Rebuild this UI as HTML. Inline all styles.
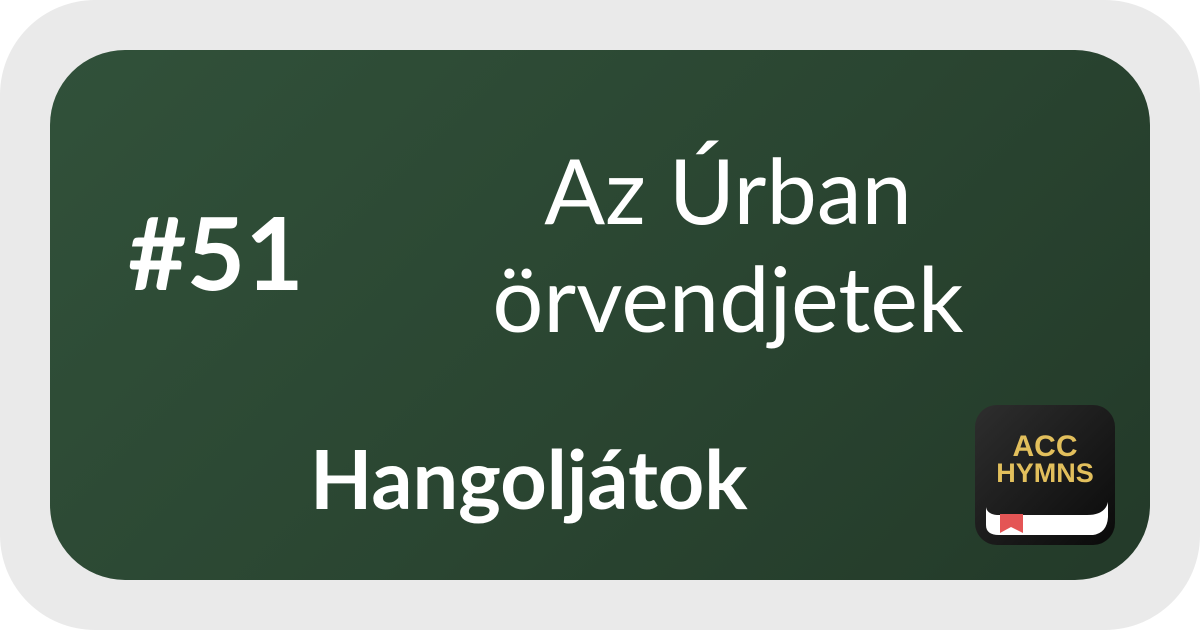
<!DOCTYPE html>
<html><head><style>
html,body{margin:0;padding:0;background:#fff;}
.outer{position:absolute;left:0;top:0;width:1200px;height:630px;background:#eaeaea;border-radius:95px;}
.card{position:absolute;left:50px;top:50px;width:1100px;height:530px;border-radius:75px;background:linear-gradient(135deg,#31513a 0%,#2a4531 55%,#233a29 100%);}
.t{position:absolute;color:#fff;font-family:"Lato","Liberation Sans",sans-serif;white-space:nowrap;}
</style></head><body>
<div class="outer"></div>
<div class="card"></div>
<div class="t" style="left:128px;top:196px;font-size:101px;font-weight:bold;line-height:110px;">#51</div>
<div class="t" style="left:428px;width:600px;top:136px;font-size:90px;line-height:108px;text-align:center;">Az Úrban<br>örvendjetek</div>
<div class="t" style="left:310px;top:437px;font-size:81px;font-weight:bold;line-height:84px;">Hangoljátok</div>
<svg style="position:absolute;left:975px;top:405px" width="140" height="140" viewBox="0 0 140 140">
<defs><linearGradient id="g" x1="0" y1="0" x2="1" y2="1"><stop offset="0" stop-color="#2e2e2e"/><stop offset="1" stop-color="#0a0a0a"/></linearGradient></defs>
<rect x="0" y="0" width="140" height="140" rx="22" fill="url(#g)"/>
<path d="M11 102 L11 120 Q11 130 24 130 L118 130 Q132 128 133 112 L133 97 Q130 110 112 110 L22 110 Q12 109 11 102 Z" fill="#fff"/>
<path d="M25 109 L25 128 L36 122 L48 128 L48 109 Z" fill="#e45555"/>
<text x="70" y="51" text-anchor="middle" font-family="Liberation Sans,sans-serif" font-weight="bold" font-size="30" fill="#e2bf5c">ACC</text>
<text x="70" y="77" text-anchor="middle" font-family="Liberation Sans,sans-serif" font-weight="bold" font-size="27" fill="#e2bf5c">HYMNS</text>
</svg>
</body></html>
